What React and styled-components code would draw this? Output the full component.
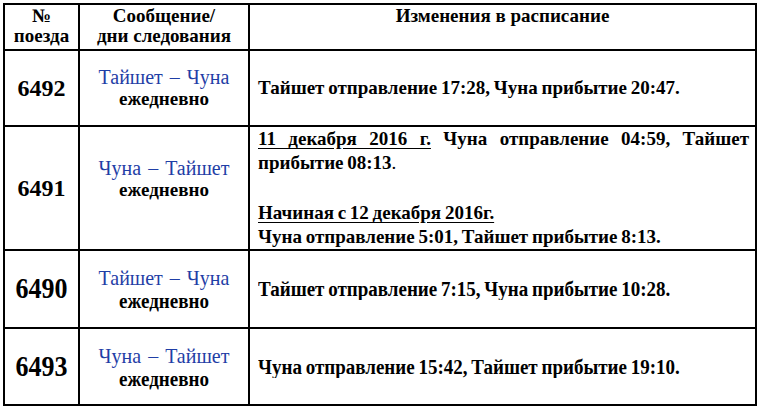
import React from 'react';
import styled, { createGlobalStyle } from 'styled-components';

const GlobalStyle = createGlobalStyle`
  html, body {
    margin: 0;
    padding: 0;
    background: #fff;
  }
  body {
    font-family: 'Liberation Serif', 'Times New Roman', serif;
    color: #000;
  }
`;

const Page = styled.div`
  width: 760px;
  height: 409px;
  padding: 3px 0 0 3px;
  box-sizing: border-box;
  overflow: hidden;
`;

const Table = styled.table`
  border-collapse: collapse;
  table-layout: fixed;
  width: 752px;

  td, th {
    border: 2px solid #000;
    padding: 0;
  }
`;

const HeadCell = styled.th`
  height: 43px;
  vertical-align: top;
  padding-top: 1px !important;
  font-size: 19px;
  font-weight: 700;
  line-height: 20px;
  text-align: center;
`;

const Row = styled.tr`
  height: ${(p) => p.$height}px;
`;

const NumCell = styled.td`
  text-align: center;
  vertical-align: middle;
  font-size: ${(p) => (p.$tall ? 26 : 24)}px;
  font-weight: 700;
`;

const RouteCell = styled.td`
  text-align: center;
  vertical-align: middle;
  padding-bottom: ${(p) => (p.$lift ? 18 : 0)}px !important;
`;

const Route = styled.div`
  color: #1f3ea6;
  font-size: 20px;
  line-height: 22px;
  word-spacing: 2px;
`;

const Days = styled.div`
  font-size: 19px;
  font-weight: 700;
  line-height: 22px;
`;

const ChangeCell = styled.td`
  vertical-align: middle;
  padding: 0 6px 0 8px !important;
  font-size: 19px;
  font-weight: 700;
  line-height: 24px;
  word-spacing: -1px;
`;

// rows 3-4 of the source are drawn a little taller
const Stretch = styled.div`
  transform: ${(p) => (p.$tall ? 'scaleY(1.1)' : 'none')};
`;

const Justified = styled.div`
  text-align: justify;
  text-align-last: justify;
  word-spacing: 0;
`;

const Underlined = styled.span`
  text-decoration: underline;
  text-underline-offset: 3px;
`;

const Plain = styled.span`
  font-weight: 400;
`;

const Gap = styled.div`
  height: 26px;
`;

const rows = [
  { num: '6492', route: 'Тайшет  – Чуна', text: 'Тайшет отправление 17:28, Чуна прибытие 20:47.', height: 76 },
  { num: '6491', route: 'Чуна  – Тайшет', lift: true, height: 122 },
  { num: '6490', route: 'Тайшет  – Чуна', text: 'Тайшет отправление 7:15, Чуна прибытие 10:28.', tall: true, height: 78 },
  { num: '6493', route: 'Чуна – Тайшет', text: 'Чуна отправление 15:42, Тайшет прибытие 19:10.', tall: true, height: 77 },
];

export default function App() {
  return (
    <Page>
      <GlobalStyle />
      <Table>
        <colgroup>
          <col style={{ width: 75 }} />
          <col style={{ width: 170 }} />
          <col style={{ width: 507 }} />
        </colgroup>
        <thead>
          <tr>
            <HeadCell>№<br />поезда</HeadCell>
            <HeadCell>Сообщение/<br />дни следования</HeadCell>
            <HeadCell>Изменения в расписание</HeadCell>
          </tr>
        </thead>
        <tbody>
          {rows.map((r) => (
            <Row key={r.num} $height={r.height}>
              <NumCell $tall={r.tall}>
                <Stretch $tall={r.tall}>{r.num}</Stretch>
              </NumCell>
              <RouteCell $lift={r.lift}>
                <Stretch $tall={r.tall}>
                  <Route>{r.route}</Route>
                  <Days>ежедневно</Days>
                </Stretch>
              </RouteCell>
              <ChangeCell>
                {r.text ? (
                  <Stretch $tall={r.tall}>{r.text}</Stretch>
                ) : (
                  <div>
                    <Justified>
                      <Underlined>11 декабря 2016 г.</Underlined> Чуна отправление 04:59, Тайшет
                    </Justified>
                    <div>
                      прибытие 08:13<Plain>.</Plain>
                    </div>
                    <Gap />
                    <div>
                      <Underlined>Начиная с 12 декабря 2016г.</Underlined>
                    </div>
                    <div>Чуна отправление 5:01, Тайшет прибытие 8:13.</div>
                  </div>
                )}
              </ChangeCell>
            </Row>
          ))}
        </tbody>
      </Table>
    </Page>
  );
}
